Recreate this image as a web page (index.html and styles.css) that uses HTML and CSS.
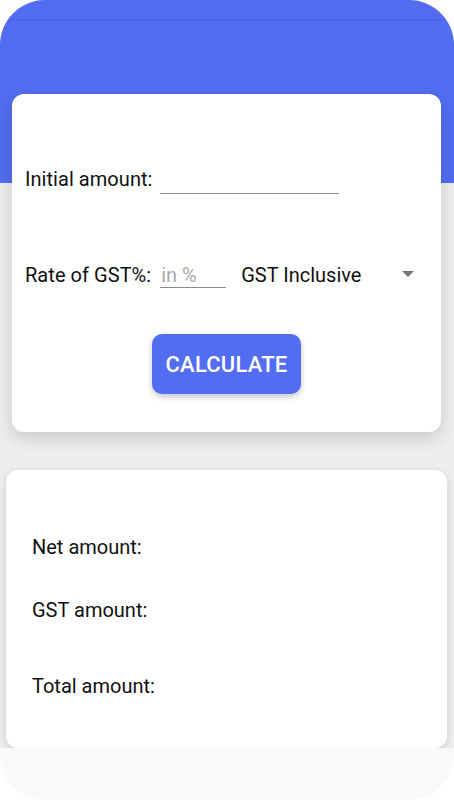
FILE: index.html
```html
<!DOCTYPE html>
<html lang="en">
<head>
<meta charset="utf-8">
<title>GST Calculator</title>
<link rel="stylesheet" href="styles.css">
</head>
<body>
<div class="phone">
  <div class="screen">
    <div class="header"><div class="statusbar"></div></div>
    <div class="card card-input">
      <div class="row row-initial">
        <span class="label">Initial amount:</span>
        <div class="field field-wide"></div>
      </div>
      <div class="row row-rate">
        <span class="label">Rate of GST%:</span>
        <div class="field field-rate"><span class="placeholder">in %</span></div>
        <div class="spinner">
          <span class="spinner-text">GST Inclusive</span>
          <svg class="arrow" width="12" height="6" viewBox="0 0 12 6"><path d="M0 0H12L6 6Z" fill="#757575"/></svg>
        </div>
      </div>
      <button class="calc">CALCULATE</button>
    </div>
    <div class="card card-result">
      <div class="result r-net">Net amount:</div>
      <div class="result r-gst">GST amount:</div>
      <div class="result r-total">Total amount:</div>
    </div>
  </div>
  <div class="navbar"></div>
</div>
</body>
</html>
```

FILE: styles.css
```css
html, body {
  margin: 0;
  padding: 0;
  background: #ffffff;
}

.phone {
  width: 454px;
  height: 800px;
  border-radius: 45px;
  overflow: hidden;
  background: #f9f9f9;
  display: flex;
  flex-direction: column;
  font-family: Roboto, "Noto Sans", sans-serif;
  color: #111111;
}

.screen {
  height: 748px;
  flex-shrink: 0;
  overflow: hidden;
  background: #eeeeee;
  display: flex;
  flex-direction: column;
}

.header {
  height: 183px;
  flex-shrink: 0;
  background: #536DF2;
}

.statusbar {
  height: 19px;
  box-shadow: 0 1px 2px rgba(0, 0, 0, 0.10);
}

.card {
  background: #ffffff;
  border-radius: 12px;
  box-sizing: border-box;
  flex-shrink: 0;
}

.card-input {
  margin: -89px 13px 0 12px;
  height: 338px;
  padding: 73px 13px 0 13px;
  display: flex;
  flex-direction: column;
  box-shadow: 0 6px 18px rgba(0, 0, 0, 0.16);
}

.row {
  display: flex;
  align-items: flex-start;
}

.label {
  font-size: 20px;
  line-height: 24px;
  white-space: nowrap;
  letter-spacing: 0.05px;
}

.field {
  box-sizing: border-box;
  border-bottom: 1px solid #8c8c8c;
}

.field-wide {
  width: 179px;
  height: 27px;
  margin-left: 7px;
}

.row-rate {
  margin-top: 69px;
}

.field-rate {
  width: 66px;
  height: 25px;
  margin-left: 9px;
  font-size: 20px;
  line-height: 24px;
}

.placeholder {
  color: #a8a8a8;
  padding-left: 1px;
}

.spinner {
  width: 173px;
  height: 24px;
  margin-left: 15px;
  display: flex;
  align-items: center;
  justify-content: space-between;
  font-size: 20px;
  line-height: 24px;
}

.arrow {
  display: block;
  margin-top: -2px;
}

.calc {
  align-self: center;
  margin-top: 46px;
  width: 149px;
  height: 60px;
  border: none;
  border-radius: 10px;
  background: #536DF2;
  color: #ffffff;
  font-family: Roboto, "Noto Sans", sans-serif;
  font-weight: 500;
  font-size: 22px;
  letter-spacing: 0.2px;
  padding: 0;
  box-shadow: 0 3px 6px rgba(0, 0, 0, 0.22);
}

.card-result {
  margin: 38px 7px 0 6px;
  height: 278px;
  padding: 65px 0 0 26px;
  box-shadow: 0 2px 8px rgba(0, 0, 0, 0.14);
}

.result {
  font-size: 20px;
  line-height: 24px;
}

.r-gst {
  margin-top: 39px;
}

.r-total {
  margin-top: 52px;
}

.navbar {
  flex: 1;
  background: #f9f9f9;
}
```
